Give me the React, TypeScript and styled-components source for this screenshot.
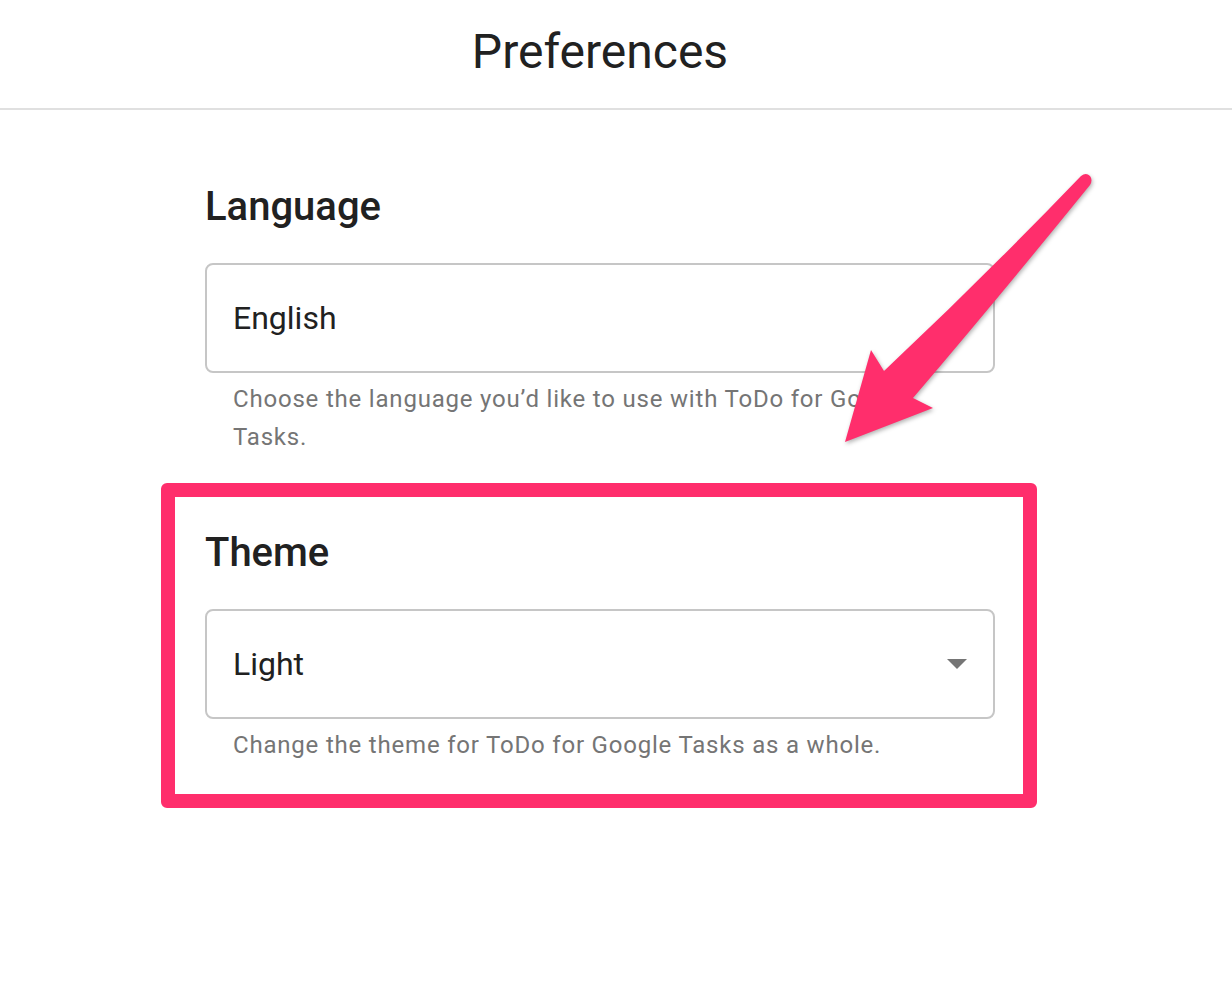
import styled, { createGlobalStyle } from 'styled-components';

const GlobalStyle = createGlobalStyle`
    html, body {
        margin: 0;
        padding: 0;
        background: #fff;
    }
    body {
        font-family: Roboto, "Liberation Sans", Arial, sans-serif;
        color: #212121;
    }
`;

const Page = styled.div`
    position: relative;
    width: 1232px;
    min-height: 982px;
    background: #fff;
`;

const Header = styled.header`
    height: 104px;
    padding-bottom: 4px;
    padding-right: 32px;
    border-bottom: 2px solid #e0e0e0;
    text-align: center;

    h1 {
        margin: 0;
        font-size: 48px;
        font-weight: 400;
        line-height: 104px;
        color: #212121;
    }
`;

const Main = styled.main`
    width: 790px;
    margin: 0 auto;
    padding: 75px 32px 0 0;
    display: flex;
    flex-direction: column;
`;

const Section = styled.section<{ $highlight?: boolean }>`
    display: flex;
    flex-direction: column;

    ${({ $highlight }) => $highlight && `
        margin: 27px -42px 0 -44px;
        padding: 34px 28px 30px 30px;
        border: 14px solid #ff2e6c;
        border-radius: 6px;
    `}
`;

const Heading = styled.h2`
    margin: 0 0 34px;
    font-size: 40px;
    font-weight: 500;
    line-height: 44px;
    color: #212121;
`;

const Field = styled.div`
    box-sizing: border-box;
    height: 110px;
    padding: 0 26px;
    border: 2px solid #c6c6c6;
    border-radius: 8px;
    display: flex;
    align-items: center;
    justify-content: space-between;
    font-size: 32px;
    color: #212121;
`;

const Helper = styled.p`
    margin: 7px 0 0;
    padding: 0 28px;
    font-size: 24px;
    line-height: 38px;
    letter-spacing: 0.8px;
    color: #757575;
`;

const Pointer = styled.svg`
    position: absolute;
    left: 0;
    top: 0;
    width: 1232px;
    height: 982px;
    pointer-events: none;
    filter: drop-shadow(1px 2px 2px rgba(0, 0, 0, 0.3));
`;

const Caret = () => (
    <svg width="20" height="10" viewBox="0 0 20 10">
        <polygon points="0,0 20,0 10,10" fill="#757575" />
    </svg>
);

export default function App() {
    return (
        <Page>
            <GlobalStyle />
            <Header>
                <h1>Preferences</h1>
            </Header>
            <Main>
                <Section>
                    <Heading>Language</Heading>
                    <Field>English</Field>
                    <Helper>Choose the language you’d like to use with ToDo for Google Tasks.</Helper>
                </Section>
                <Section $highlight>
                    <Heading>Theme</Heading>
                    <Field>
                        Light
                        <Caret />
                    </Field>
                    <Helper>Change the theme for ToDo for Google Tasks as a whole.</Helper>
                </Section>
            </Main>
            <Pointer viewBox="0 0 1232 982">
                <path
                    d="M 1081 176 Q 1086 172 1090 176 Q 1093 180 1090 185 Q 1000 296 913 398 L 933 408 L 845 442 L 871 350 L 884 371 Q 985 276 1081 176 Z"
                    fill="#ff2e6c"
                />
            </Pointer>
        </Page>
    );
}
